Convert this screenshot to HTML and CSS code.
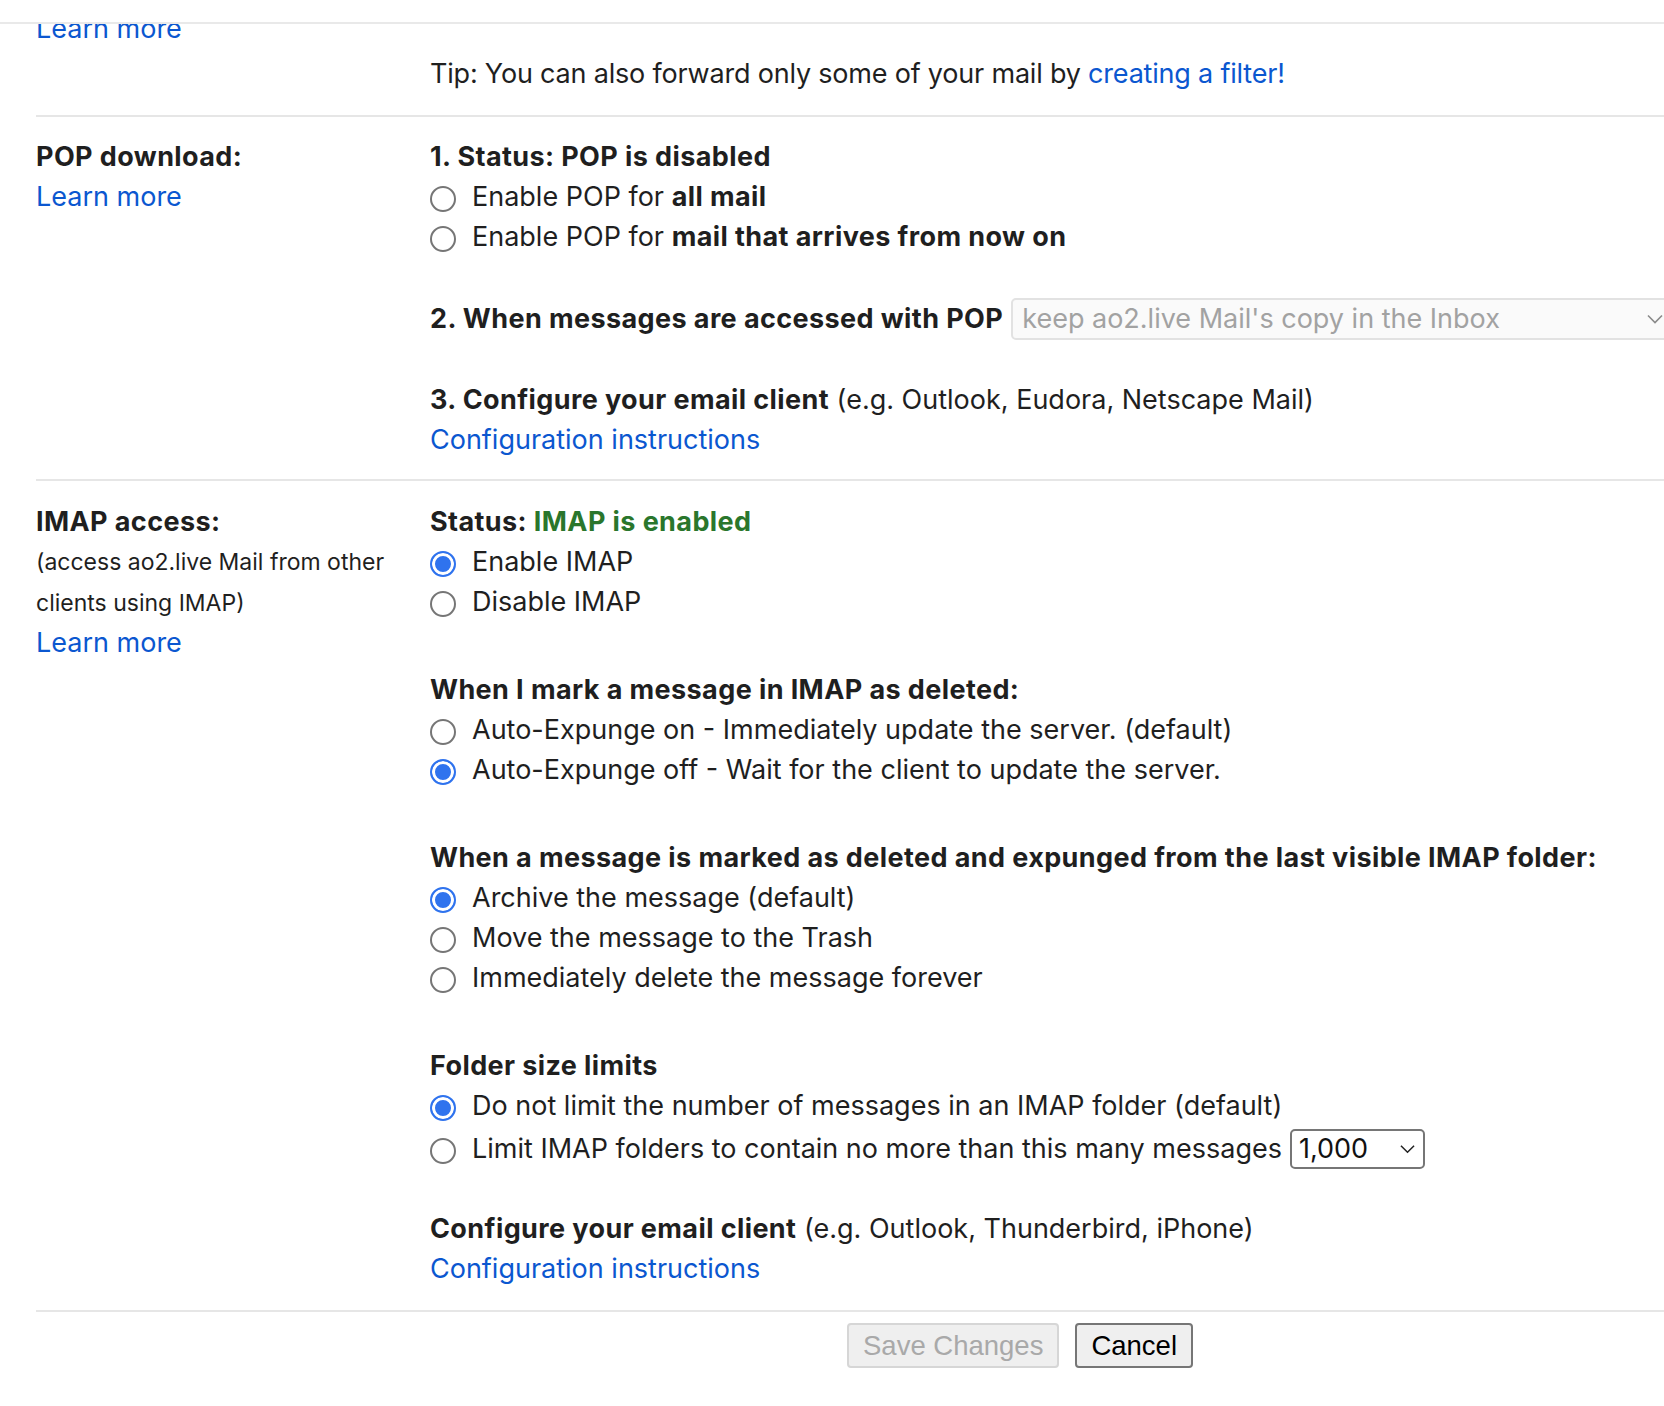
FILE: index.html
```html
<!DOCTYPE html>
<html lang="en">
<head>
<meta charset="utf-8">
<title>Settings – Forwarding and POP/IMAP</title>
<link rel="stylesheet" href="styles.css">
</head>
<body>
<div class="topbar"></div>
<div class="viewport">
  <div class="content">
    <section class="row row-first">
      <div class="label"><a class="link" href="#">Learn more</a></div>
      <div class="value">
        <p class="tip">Tip: You can also forward only some of your mail by <a class="link" href="#">creating a filter!</a></p>
      </div>
    </section>

    <section class="row">
      <div class="label">
        <div class="label-title">POP download:</div>
        <a class="link" href="#">Learn more</a>
      </div>
      <div class="value">
        <div class="block">
          <div class="line strong">1. Status: POP is disabled</div>
          <div class="opt"><span class="radio"></span><span>Enable POP for <b>all mail</b></span></div>
          <div class="opt"><span class="radio"></span><span>Enable POP for <b>mail that arrives from now on</b></span></div>
        </div>
        <div class="block gap-s">
          <div class="select-line">
            <b>2. When messages are accessed with POP</b>
            <div class="select select-disabled">
              <span>keep ao2.live Mail's copy in the Inbox</span>
              <svg class="chev" viewBox="0 0 16 10" width="16" height="10"><path d="M1 1.5 L8 8.5 L15 1.5" fill="none" stroke="currentColor" stroke-width="1.6"/></svg>
            </div>
          </div>
        </div>
        <div class="block gap-xs">
          <div class="line"><b>3. Configure your email client</b> (e.g. Outlook, Eudora, Netscape Mail)</div>
          <a class="link line" href="#">Configuration instructions</a>
        </div>
      </div>
    </section>

    <section class="row row-imap">
      <div class="label">
        <div class="label-title">IMAP access:</div>
        <div class="label-note">(access ao2.live Mail from other</div>
        <div class="label-note">clients using IMAP)</div>
        <a class="link" href="#">Learn more</a>
      </div>
      <div class="value">
        <div class="block">
          <div class="line strong">Status: <span class="ok">IMAP is enabled</span></div>
          <div class="opt"><span class="radio checked"></span><span>Enable IMAP</span></div>
          <div class="opt"><span class="radio"></span><span>Disable IMAP</span></div>
        </div>
        <div class="block gap-l">
          <div class="line strong">When I mark a message in IMAP as deleted:</div>
          <div class="opt"><span class="radio"></span><span>Auto-Expunge on - Immediately update the server. (default)</span></div>
          <div class="opt"><span class="radio checked"></span><span>Auto-Expunge off - Wait for the client to update the server.</span></div>
        </div>
        <div class="block gap-l">
          <div class="line strong">When a message is marked as deleted and expunged from the last visible IMAP folder:</div>
          <div class="opt"><span class="radio checked"></span><span>Archive the message (default)</span></div>
          <div class="opt"><span class="radio"></span><span>Move the message to the Trash</span></div>
          <div class="opt"><span class="radio"></span><span>Immediately delete the message forever</span></div>
        </div>
        <div class="block gap-l">
          <div class="line strong">Folder size limits</div>
          <div class="opt"><span class="radio checked"></span><span>Do not limit the number of messages in an IMAP folder (default)</span></div>
          <div class="opt opt-select"><span class="radio"></span><span>Limit IMAP folders to contain no more than this many messages</span>
            <div class="select select-small">
              <span>1,000</span>
              <svg class="chev" viewBox="0 0 16 10" width="16" height="10"><path d="M1 1.5 L8 8.5 L15 1.5" fill="none" stroke="currentColor" stroke-width="1.6"/></svg>
            </div>
          </div>
        </div>
        <div class="block gap-xxs">
          <div class="line"><b>Configure your email client</b> (e.g. Outlook, Thunderbird, iPhone)</div>
          <a class="link line" href="#">Configuration instructions</a>
        </div>
      </div>
    </section>

    <div class="footer">
      <button class="btn btn-disabled" type="button" disabled>Save Changes</button>
      <button class="btn" type="button">Cancel</button>
    </div>
  </div>
</div>
</body>
</html>
```

FILE: styles.css
```css
html, body {
  margin: 0;
  padding: 0;
  background: #ffffff;
  overflow: hidden;
}

body {
  width: 1664px;
  height: 1406px;
  font-family: "Inter", "Roboto", "Noto Sans", sans-serif;
  font-size: 27px;
  line-height: 40px;
  color: #1f1f1f;
}

.topbar {
  height: 22px;
  border-bottom: 2px solid #e9e9e9;
}

.viewport {
  height: 1382px;
  overflow: hidden;
}

.content {
  margin-top: -15px;
}

.row {
  display: grid;
  grid-template-columns: 394px 1fr;
  margin-left: 36px;
  border-top: 2px solid #e6e6e6;
  padding: 20px 0 19px;
}

.row-first {
  border-top: none;
  padding-top: 0;
  padding-bottom: 21px;
}

.row-imap {
  padding: 21px 0 21px;
}

.label {
  display: flex;
  flex-direction: column;
  align-items: flex-start;
}

.label-title {
  font-weight: 700;
  letter-spacing: 0.4px;
}

.label-note {
  font-size: 23px;
  line-height: 40.5px;
}

.value {
  display: flex;
  flex-direction: column;
  min-width: 0;
}

.tip {
  margin: 45px 0 0;
  letter-spacing: -0.2px;
}

.link {
  color: #0b57d0;
  text-decoration: none;
}

b, .strong {
  font-weight: 700;
  letter-spacing: 0.4px;
}

.ok {
  color: #2a762c;
}

.block {
  display: flex;
  flex-direction: column;
  align-items: flex-start;
}

.gap-xxs {
  margin-top: 39px;
}

.gap-xs {
  margin-top: 41px;
}

.gap-s {
  margin-top: 42px;
}

.gap-l {
  margin-top: 48px;
}

.line {
  display: block;
  white-space: nowrap;
}

.opt {
  display: flex;
  align-items: center;
  white-space: nowrap;
  height: 40px;
}

.opt-select {
  height: 42px;
  margin-top: 2px;
}

.radio {
  box-sizing: border-box;
  flex: none;
  width: 26px;
  height: 26px;
  margin: 4px 16px 0 0;
  border: 2px solid #767676;
  border-radius: 50%;
  background: #ffffff;
}

.radio.checked {
  border-color: #2f73ee;
  background: #2f73ee;
  box-shadow: inset 0 0 0 3px #ffffff;
}

.select-line {
  display: flex;
  align-items: center;
  height: 40px;
  white-space: nowrap;
}

.select {
  box-sizing: border-box;
  display: flex;
  align-items: center;
  justify-content: space-between;
  flex: none;
  border-radius: 5px;
  letter-spacing: 0;
  font-weight: 400;
}

.select-disabled {
  width: 666px;
  height: 42px;
  margin-left: 8px;
  padding: 0 12px 0 9px;
  border: 2px solid #e2e2e2;
  background: #fafafa;
  color: #a2a2a2;
}

.select-disabled .chev {
  color: #8a8a8a;
}

.select-small {
  width: 135px;
  height: 40px;
  margin-left: 8px;
  padding: 0 8px 0 7px;
  border: 2px solid #767676;
  background: #ffffff;
  color: #111111;
}

.select-small .chev {
  color: #222222;
  width: 15px;
}

.footer {
  display: flex;
  gap: 16px;
  margin-left: 36px;
  border-top: 2px solid #e6e6e6;
  padding: 11px 0 0 811px;
}

.btn {
  box-sizing: border-box;
  height: 45px;
  padding: 0 14px;
  font-family: "Liberation Sans", Arial, sans-serif;
  font-size: 27.5px;
  color: #000000;
  background: #efefef;
  border: 2px solid #767676;
  border-radius: 4px;
}

.btn-disabled {
  color: #a9a9a9;
  border-color: #d6d6d6;
}
```
